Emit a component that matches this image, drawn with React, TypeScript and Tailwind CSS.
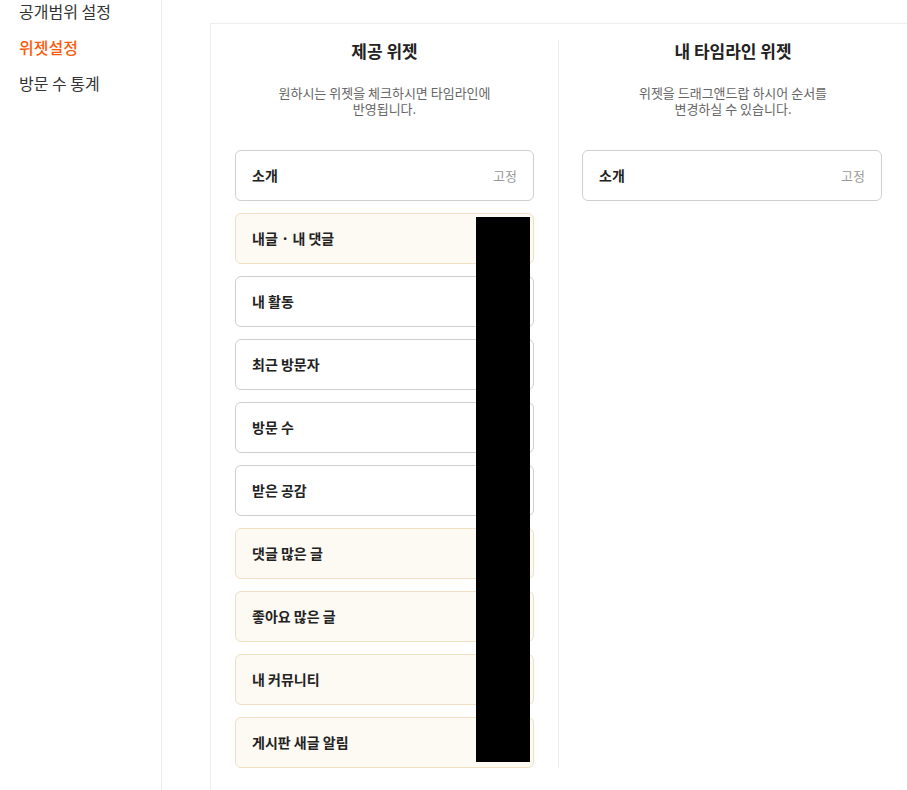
import type { ReactNode } from "react";

type Widget = { name: string; fixed?: boolean; tinted?: boolean };

const provided: Widget[] = [
  { name: "소개", fixed: true },
  { name: "내글 · 내 댓글", tinted: true },
  { name: "내 활동" },
  { name: "최근 방문자" },
  { name: "방문 수" },
  { name: "받은 공감" },
  { name: "댓글 많은 글", tinted: true },
  { name: "좋아요 많은 글", tinted: true },
  { name: "내 커뮤니티", tinted: true },
  { name: "게시판 새글 알림", tinted: true },
];

const menu = [
  { label: "공개범위 설정" },
  { label: "위젯설정", active: true },
  { label: "방문 수 통계" },
];

function WidgetRow({ widget }: { widget: Widget }) {
  return (
    <div
      className={`flex h-[51px] items-center justify-between rounded-md border pl-4 pr-4 ${
        widget.tinted ? "border-[#f0dfc2] bg-[#fdf9f3]" : "border-[#cfcfcf] bg-white"
      }`}
    >
      <span className="text-[14px] font-bold text-[#222]">{widget.name}</span>
      {widget.fixed ? <span className="text-[13px] text-[#999]">고정</span> : null}
    </div>
  );
}

function Column({
  title,
  desc,
  children,
  divider,
  listClass,
}: {
  title: string;
  desc: ReactNode;
  children: ReactNode;
  divider?: boolean;
  listClass: string;
}) {
  return (
    <section className={`flex w-[348px] flex-col ${divider ? "border-r border-[#eeeeee]" : ""}`}>
      <h2 className="text-center text-[17px] font-bold leading-[22px] text-[#222]">{title}</h2>
      <p className="mt-[23px] text-center text-[13px] leading-[16px] text-[#666]">{desc}</p>
      <div className={`relative mt-[33px] flex flex-col gap-3 ${listClass}`}>{children}</div>
    </section>
  );
}

export default function App() {
  return (
    <div
      className="flex min-h-[790px] bg-white"
      style={{ fontFamily: '"Noto Sans CJK KR", "Noto Sans", sans-serif' }}
    >
      {/* left menu */}
      <aside className="w-[162px] shrink-0 border-r border-[#ececec]">
        <ul className="flex flex-col gap-4 pl-[19px] pt-[1px]">
          {menu.map((m) => (
            <li
              key={m.label}
              className={`text-[16px] leading-[20px] ${m.active ? "font-medium text-[#ff5a0a]" : "text-[#333]"}`}
            >
              {m.label}
            </li>
          ))}
        </ul>
      </aside>

      {/* main */}
      <main className="flex-1 pl-12 pt-[23px]">
        <div className="flex border border-r-0 border-[#eeeeee] pb-6 pt-4">
          <Column
            divider
            listClass="pl-6 pr-6"
            title="제공 위젯"
            desc={
              <>
                원하시는 위젯을 체크하시면 타임라인에
                <br />
                반영됩니다.
              </>
            }
          >
            {provided.map((w) => (
              <WidgetRow key={w.name} widget={w} />
            ))}
            <div className="absolute left-[265px] top-[67px] h-[545px] w-[54px] bg-black" />
          </Column>
          <Column
            listClass="pl-[23px] pr-[25px]"
            title="내 타임라인 위젯"
            desc={
              <>
                위젯을 드래그앤드랍 하시어 순서를
                <br />
                변경하실 수 있습니다.
              </>
            }
          >
            <WidgetRow widget={{ name: "소개", fixed: true }} />
          </Column>
        </div>
      </main>
    </div>
  );
}
